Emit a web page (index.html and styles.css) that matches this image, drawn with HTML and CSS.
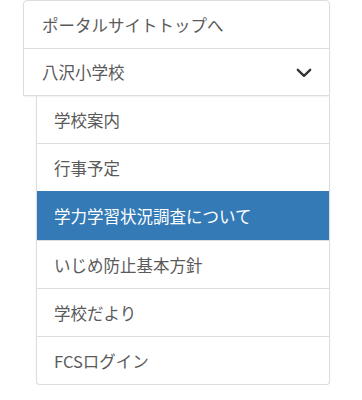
FILE: index.html
```
<!DOCTYPE html>
<html lang="ja">
<head>
<meta charset="utf-8">
<link rel="stylesheet" href="styles.css">
</head>
<body>
<nav class="side">
  <div class="topbox">
    <a class="row">ポータルサイトトップへ</a>
    <a class="row row-toggle">八沢小学校
      <svg class="chev" width="16" height="10" viewBox="0 0 16 10"><path d="M1.8 1.8 L8 7.8 L14.2 1.8" fill="none" stroke="#333" stroke-width="2.3" stroke-linecap="round" stroke-linejoin="round"/></svg>
    </a>
  </div>
  <ul class="sub">
    <li class="item">学校案内</li>
    <li class="item">行事予定</li>
    <li class="item active">学力学習状況調査について</li>
    <li class="item">いじめ防止基本方針</li>
    <li class="item">学校だより</li>
    <li class="item">FCSログイン</li>
  </ul>
</nav>
</body>
</html>
```
FILE: styles.css
```
html, body {
  margin: 0;
  padding: 0;
  background: #fff;
}
body {
  font-family: "Noto Sans CJK JP", "Noto Sans", sans-serif;
  font-size: 16.5px;
  color: #5a5a5a;
}
.side {
  margin-left: 23px;
  width: 307px;
  display: flex;
  flex-direction: column;
}
.topbox {
  border: 1px solid #ddd;
  border-radius: 4px 4px 0 0;
  box-shadow: 0 1px 2px rgba(0,0,0,0.06);
}
.row {
  display: flex;
  align-items: center;
  justify-content: space-between;
  height: 47px;
  padding: 0 17px 0 18px;
  box-sizing: border-box;
  color: #5a5a5a;
  text-decoration: none;
}
.row + .row {
  border-top: 1px solid #ddd;
}
.chev {
  display: block;
  margin-top: 1px;
}
.sub {
  list-style: none;
  margin: 0 0 0 13px;
  padding: 0;
  border: 1px solid #ddd;
  border-top: none;
  border-radius: 0 0 4px 4px;
  overflow: hidden;
  box-shadow: 0 1px 2px rgba(0,0,0,0.06);
}
.item {
  height: 48px;
  box-sizing: border-box;
  display: flex;
  align-items: center;
  padding-left: 17px;
  border-top: 1px solid #ddd;
}
.item:first-child {
  border-top: none;
  height: 47px;
}
.item.active {
  background: #337ab7;
  color: #fff;
  border-top-color: #337ab7;
  height: 49px;
}
```
